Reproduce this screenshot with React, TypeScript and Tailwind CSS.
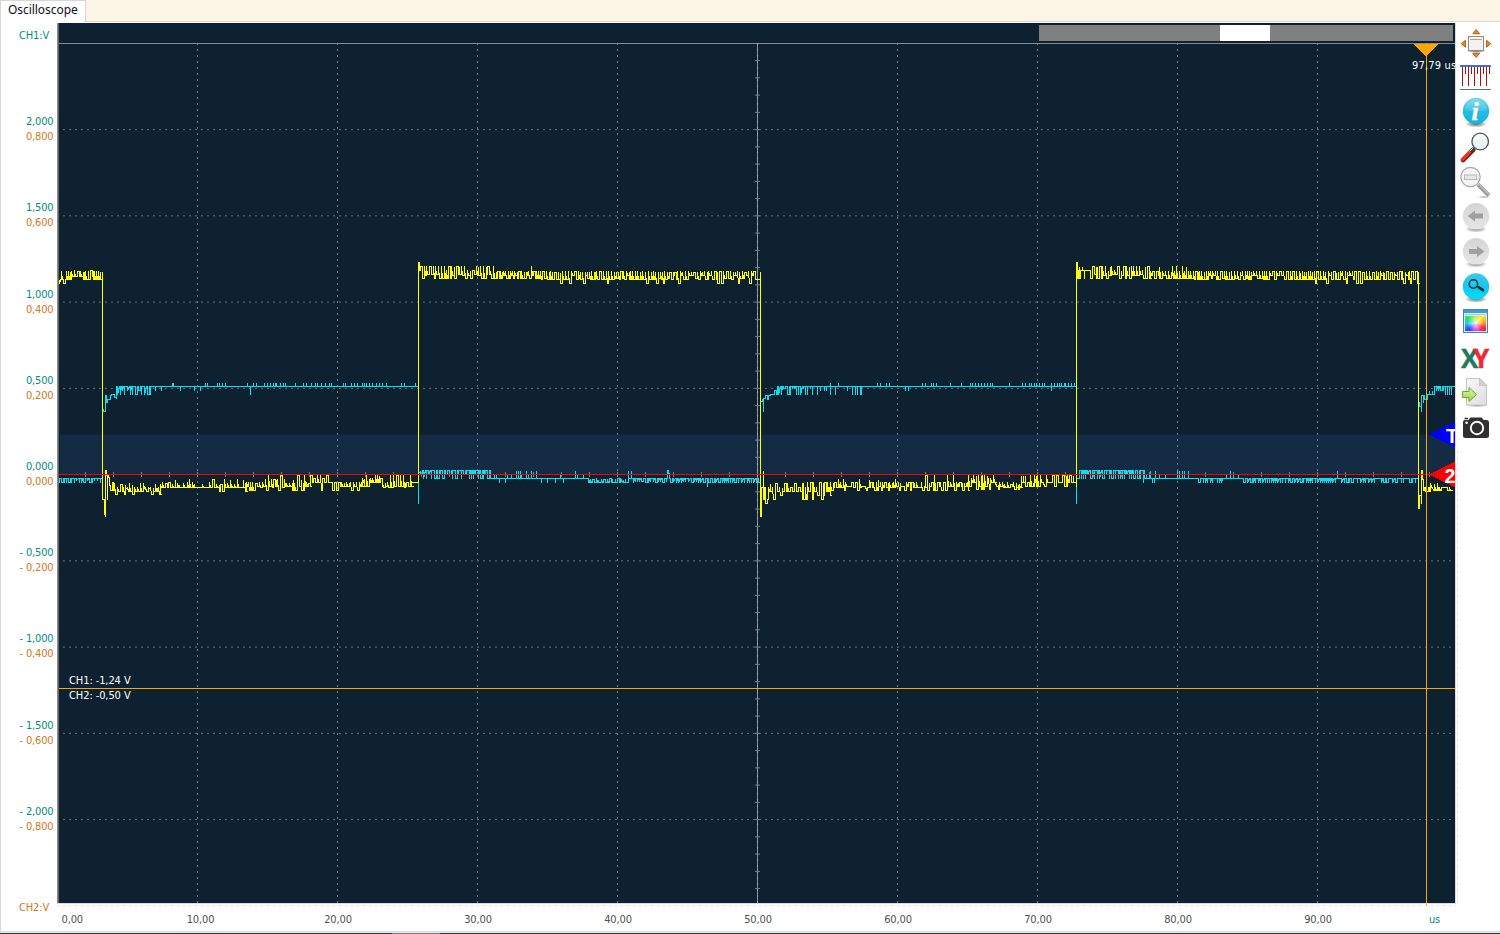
import type { ReactNode } from "react";

const YELLOW = "#ffff00";
const CYAN = "#0adff0";

/* ---------- waveform helpers ---------- */

/** x, y, and whether the segment leading here is slanted. */
type Pt = [number, number, boolean?];

function rng(seed: number) {
  let s = seed;
  return () => {
    s = (s + 0x6d2b79f5) | 0;
    let t = Math.imul(s ^ (s >>> 15), 1 | s);
    t = (t + Math.imul(t ^ (t >>> 7), 61 | t)) ^ t;
    return ((t ^ (t >>> 14)) >>> 0) / 4294967296;
  };
}

/** Full swings off a base level: narrow spikes, short plateaus and slanted returns. */
function pulses(x0: number, x1: number, base: number, levels: number[], seed: number): Pt[] {
  const r = rng(seed);
  const out: Pt[] = [];
  let x = x0;
  while (x < x1) {
    const level = levels[Math.floor(r() * levels.length)];
    out.push([x, base], [x, level]);
    const k = r();
    if (k < 0.4 && x + 2 < x1) {
      x += k < 0.28 ? 1 : 2;
      out.push([x, base, true]);
      x += 1;
    } else if (k < 0.62 && x + 2 < x1) {
      x += 2;
      out.push([x, level], [x, base]);
      x += r() < 0.6 ? 1 : 2;
    } else {
      out.push([x, base]);
      x += r() < 0.55 ? 2 : 3;
    }
  }
  return out;
}

/** Dense swings between an upper and a lower group of levels. */
function noise(x0: number, x1: number, highs: number[], lows: number[], seed: number): Pt[] {
  const r = rng(seed);
  const out: Pt[] = [];
  const pick = (a: number[]) => a[Math.floor(r() * a.length)];
  let x = x0;
  while (x < x1) {
    const hi = pick(highs);
    const lo = pick(lows);
    out.push([x, hi]);
    const k = r();
    if (k < 0.55) {
      x += 1;
      out.push([x, lo, true]);
    } else if (k < 0.75) {
      x += 2;
      out.push([x, hi], [x, lo]);
    } else {
      out.push([x, lo]);
    }
    x += r() < 0.4 ? 1 : 2;
    out.push([x, lo, r() < 0.5]);
  }
  return out;
}

/** Flat line with one pixel wide spikes. */
function spikes(x0: number, x1: number, base: number, at: Pt[]): Pt[] {
  const out: Pt[] = [[x0, base]];
  at.forEach(([x, y]) => out.push([x, y], [x, base]));
  out.push([x1, base]);
  return out;
}

const ups = (origin: number, level: number, xs: number[]): Pt[] =>
  xs.map((x) => [Math.floor(origin + x / 3), level]);

const merge = (...lists: Pt[][]): Pt[] => lists.flat().sort((a, b) => a[0] - b[0]);

function toPath(pts: Pt[]) {
  let d = `M${pts[0][0] + 0.5} ${pts[0][1] + 0.5}`;
  for (let i = 1; i < pts.length; i++) {
    const [x, y, slanted] = pts[i];
    d += slanted ? `L${x + 0.5} ${y + 0.5}` : `H${x + 0.5}V${y + 0.5}`;
  }
  return d;
}

/* Channel 1 */
const ch1: Pt[] = [
  ...pulses(59, 71, 279, [271, 271, 283], 3),
  ...noise(71, 94, [271, 270, 271], [279, 279, 276], 5),
  ...pulses(94, 102, 279, [271, 271, 283], 6),
  [102, 271], [102, 499], [104, 499], [104, 514], [105, 516], [105, 470], [106, 475], [107, 499], [107, 475],
  [108, 477], [109, 485], [110, 490], [112, 482], [113, 490],
  ...noise(114, 160, [483, 487, 484, 487], [491, 491, 488, 494, 491], 8),
  ...noise(160, 246, [483, 487, 484, 479, 482], [487, 487, 491, 487], 21),
  ...noise(246, 310, [482, 475, 483, 482, 479], [486, 490, 486, 487], 17),
  ...noise(310, 330, [475, 475, 478], [482, 490, 482], 33),
  ...noise(330, 362, [482, 482, 482, 475], [486, 490, 486], 35),
  ...noise(362, 382, [475, 475, 478], [482, 486, 482], 36),
  ...noise(382, 411, [475, 482, 482, 475], [486, 486, 483, 487], 37),
  [411, 482], [418, 482], [418, 262], [419, 270],
  ...noise(420, 490, [266, 266, 270, 266], [278, 274, 278, 275], 41),
  ...noise(490, 540, [271, 271, 266, 271], [278, 278, 275], 52),
  ...noise(540, 757, [271, 271, 271, 272, 271], [279, 278, 279, 279, 279, 275, 283], 63),
  [758, 279], [760, 279], [760, 271], [760, 516], [761, 487], [763, 470], [763, 499], [764, 487], [765, 503], [767, 499],
  ...noise(768, 830, [487, 483, 487, 482], [491, 499, 491, 495, 491], 72),
  ...noise(830, 925, [482, 482, 486, 479, 482], [487, 490, 486, 487], 81),
  ...noise(925, 968, [482, 475, 482, 482], [486, 490, 486], 93),
  ...noise(968, 995, [475, 475, 475, 478], [482, 489, 482, 486], 99),
  ...noise(995, 1021, [482, 482, 484], [487, 489, 486], 101),
  ...noise(1021, 1075, [475, 475, 475, 482], [482, 486, 482, 486], 102),
  [1076, 486], [1076, 262], [1077, 278],
  [1078, 270], [1079, 266], [1079, 278], [1080, 270], [1082, 266], [1082, 270], [1084, 278], [1084, 270],
  [1090, 270], [1090, 278],
  ...noise(1092, 1150, [266, 266, 270, 266], [278, 274, 278, 275], 107),
  ...noise(1150, 1190, [271, 266, 271, 271], [278, 278, 275, 278], 113),
  ...noise(1190, 1300, [271, 271, 271, 271], [279, 278, 279, 275], 118),
  ...noise(1300, 1417, [271, 271, 272, 271], [279, 279, 279, 279, 275, 279, 283], 122),
  [1418, 271], [1418, 508], [1419, 495], [1421, 503], [1421, 470], [1422, 479], [1423, 490], [1424, 487],
  [1425, 491], [1428, 487], [1429, 491],
  ...noise(1430, 1452, [483, 483, 487], [490, 490, 487], 131),
];

/* Channel 2 */
const ch2: Pt[] = [
  ...pulses(59, 102, 478, [482, 482, 482, 480], 205),
  [102, 478], [102, 409], [103, 411], [105, 411], [105, 395], [106, 402], [107, 399], [110, 395], [111, 394],
  [114, 397], [116, 398], [116, 386],
  ...pulses(117, 152, 386, [394, 394, 390, 394], 211),
  ...spikes(152, 418, 386, merge(
    ups(58, 382, [343, 347, 443, 447, 478, 484, 493, 502, 568, 586, 595, 619, 628, 637, 646, 651, 655, 667, 676, 683, 712,
      736, 745, 760, 772, 778, 790, 802, 814, 820, 856, 862, 880, 889, 898, 913, 919, 925, 934, 943, 955, 964, 973, 985,
      1030, 1039, 1072]),
    ups(58, 390, [292, 310, 367, 409, 427]),
    ups(58, 394, [577]),
  )),
  [418, 386], [418, 503], [418, 472],
  ...pulses(420, 490, 470, [478, 478, 474, 478], 221),
  ...spikes(490, 588, 478, merge(
    ups(400, 470, [348, 356, 361, 378, 393, 408, 526]),
    ups(400, 474, [282, 290, 322, 335, 365, 385, 480, 533, 550]),
    ups(400, 482, [298, 316, 424, 442, 466, 490]),
  )),
  ...pulses(588, 628, 482, [478, 478, 479], 230),
  [628, 470], [628, 478], [631, 470], [631, 478],
  ...pulses(633, 667, 478, [482, 482, 481], 233),
  [667, 470], [668, 473], [669, 478],
  ...pulses(670, 707, 478, [482, 482, 481], 234),
  [707, 486], [707, 478],
  ...pulses(708, 757, 478, [482, 482, 482], 235),
  [758, 482], [760, 482], [760, 401], [762, 399], [763, 411], [763, 398], [765, 395], [767, 399], [768, 395],
  [770, 394], [774, 390], [776, 394], [777, 386],
  ...pulses(778, 814, 386, [394, 394, 388, 394], 241),
  ...spikes(814, 1076, 386, merge(
    ups(750, 394, [202, 240, 256, 307, 315, 321, 331, 334]),
    ups(750, 390, [212, 222, 230, 292, 466, 475]),
    ups(750, 382, [240, 265, 382, 390, 409, 418, 517, 525, 544, 550, 559, 601, 634, 661, 667, 676, 685, 694, 703, 712,
      720, 727, 778, 818, 826, 838, 845, 852, 860, 868, 876, 884, 904, 913, 922, 935, 944]),
    ups(1020, 390, [94]),
    ups(1020, 382, [118, 124, 136, 145, 154, 163]),
  )),
  [1076, 386], [1076, 503], [1076, 478],
  ...pulses(1079, 1144, 470, [478, 478, 474, 478], 251),
  ...spikes(1144, 1198, 478, merge(
    ups(1020, 482, [370, 397, 404]),
    ups(1020, 474, [380, 388, 418, 435]),
    ups(1020, 470, [390, 406, 472, 478, 486, 493, 505]),
  )),
  ...pulses(1198, 1224, 478, [482, 478, 482], 261),
  ...spikes(1224, 1243, 478, merge(ups(1020, 474, [618, 640, 655]), ups(1020, 470, [631]))),
  ...pulses(1243, 1336, 478, [482, 482, 482], 262),
  [1337, 470], [1337, 478],
  ...pulses(1338, 1417, 478, [482, 482, 478, 482], 263),
  [1418, 478], [1418, 402], [1419, 406], [1421, 411], [1421, 395], [1423, 402], [1423, 395], [1424, 399],
  [1427, 399], [1427, 394],
  ...spikes(1428, 1434, 394, [[1429, 390], [1432, 390]]),
  ...pulses(1434, 1446, 386, [394, 390, 394], 271),
  [1447, 394], [1447, 386], [1449, 394], [1449, 386], [1451, 394], [1451, 386], [1455, 386],
];

const gridX = [197, 337, 477, 617, 897, 1037, 1177, 1317];
const gridY = [-4, -3, -2, -1, 1, 2, 3, 4].map((k) => 474.6 + k * 86.25);
const ticksY = Array.from({ length: 49 }, (_, i) => 60.6 + i * 17.25);
const ticksX = Array.from({ length: 49 }, (_, i) => 85 + i * 28).filter((x) => x !== 757);

function Plot() {
  return (
    <svg className="block h-[883px] w-[1402px]" viewBox="57 23 1402 883">
      <rect x="57" y="23" width="1398" height="880" fill="#0e2131" />
      <rect x="57" y="23" width="1" height="880" fill="#8b8b8b" />
      <rect x="58" y="23" width="1" height="880" fill="#626262" />
      <rect x="60" y="434.5" width="1395" height="39.5" fill="#132b43" />

      <g stroke="#6f7d88" strokeDasharray="2 4">
        {gridX.map((x) => (
          <path key={x} d={`M${x + 0.5} 43V903`} />
        ))}
      </g>
      <g stroke="#65727d" strokeDasharray="2 4">
        {gridY.map((y) => (
          <path key={y} d={`M63 ${y}H1452`} />
        ))}
      </g>
      <path d="M59 43.5H1455" stroke="#858c93" />
      <path d="M757.5 43V903" stroke="#8b9299" />
      <path d="M757.5 43V903" stroke="#a3a9ae" strokeDasharray="2 4" />
      <g stroke="#78828b">
        {ticksY.map((y) => (
          <path key={y} d={`M755 ${y}H760`} />
        ))}
        {ticksX.map((x) => (
          <path key={x} d={`M${x + 0.5} 472V477`} />
        ))}
      </g>

      <g shapeRendering="crispEdges" fill="none">
        <path d={toPath(ch2)} stroke={CYAN} />
        <path d={toPath(ch1)} stroke={YELLOW} />
        <path d="M59 474.5H1455" stroke="#ff0000" />
        <path d="M59 688.5H1455M1426.5 43V903" stroke="#ffa500" />
        <path d="M1413 44H1439L1426 56.5Z" fill="#ffa500" />
        <path d="M1429 434.5L1455 421.5V447.5Z" fill="#0000ff" />
        <path d="M1429 474.5L1455 461.5V487.5Z" fill="#ff0000" />
      </g>

      <rect x="1039" y="25" width="414" height="16" fill="#808080" />
      <rect x="1220" y="25" width="50" height="16" fill="#ffffff" />

      <svg x="57" y="23" width="1398" height="880" viewBox="57 23 1398 880">
        <g fill="#ffffff" fontFamily="'DejaVu Sans Condensed','DejaVu Sans',sans-serif" fontSize="11">
          <text x="1412" y="69" textLength="44">97,79 us</text>
          <text x="69" y="684" textLength="61.5">CH1: -1,24 V</text>
          <text x="69" y="699" textLength="61.5">CH2: -0,50 V</text>
        </g>
        <g fill="#ffffff" fontFamily="'Liberation Sans',sans-serif" fontWeight="700" fontSize="19.5">
          <text x="1446" y="443">T</text>
          <text x="1444.5" y="483">2</text>
        </g>
      </svg>

      <path d="M57 903.5H1456M1455.5 23V904" stroke="#dcdce2" />
      <path d="M57 905.5H1456" stroke="#dcd8de" strokeDasharray="2 4" />
      <path d="M1457.5 451V903" stroke="#dcd8de" strokeDasharray="2 4" />
      <rect x="1426" y="904" width="1" height="2" fill="#ffa500" />
    </svg>
  );
}

const voltRows = [
  ["2,000", "0,800"],
  ["1,500", "0,600"],
  ["1,000", "0,400"],
  ["0,500", "0,200"],
  ["0,000", "0,000"],
  ["- 0,500", "- 0,200"],
  ["- 1,000", "- 0,400"],
  ["- 1,500", "- 0,600"],
  ["- 2,000", "- 0,800"],
];

function VoltAxis() {
  return (
    <div className="flex w-[56px] shrink-0 flex-col leading-[15px]">
      <div className="mt-[6px] h-[86.2px] shrink-0 pl-[18px] text-[#008c82]">CH1:V</div>
      {voltRows.map(([a, b]) => (
        <div key={a} className="h-[86.2px] shrink-0 pr-[3.5px] text-right">
          <div className="text-[#008c82]">{a}</div>
          <div className="text-[#cc7a1e]">{b}</div>
        </div>
      ))}
      <div className="mt-[10px] pl-[18px] text-[#cc7a1e]">CH2:V</div>
    </div>
  );
}

function TimeAxis() {
  return (
    <div className="flex h-[25px] pt-[6px] leading-[15px] text-[#505050]">
      <div className="w-[73px] shrink-0 pl-[4.5px]">0,00</div>
      <div className="w-[138px] shrink-0 pl-[3px] text-center">10,00</div>
      {["20,00", "30,00", "40,00", "50,00", "60,00", "70,00", "80,00", "90,00"].map((t) => (
        <div key={t} className="w-[140px] shrink-0 text-center">{t}</div>
      ))}
      <div className="ml-[41px] shrink-0 text-[#008c82]">us</div>
    </div>
  );
}

/* ---------- toolbar ---------- */

function Icon({ h, children }: { h: number; children: ReactNode }) {
  return (
    <svg width="32" height={h} viewBox={`0 0 32 ${h}`} className="block shrink-0" fill="none">
      {children}
    </svg>
  );
}

function Toolbar() {
  return (
    <div className="flex w-8 shrink-0 flex-col pt-[6px]">
      <svg width="0" height="0" className="absolute">
        <defs>
          <linearGradient id="aqua" x1="0" y1="0" x2="0" y2="1">
            <stop offset="0" stopColor="#72d9ef" />
            <stop offset=".5" stopColor="#27bce0" />
            <stop offset="1" stopColor="#14b4dc" />
          </linearGradient>
          <linearGradient id="cyanBall" x1="0" y1="0" x2="0" y2="1">
            <stop offset="0" stopColor="#3fc8e8" />
            <stop offset=".5" stopColor="#14c8ee" />
            <stop offset="1" stopColor="#00dcff" />
          </linearGradient>
          <linearGradient id="silver" x1="0" y1="0" x2="0" y2="1">
            <stop offset="0" stopColor="#d4d4d4" />
            <stop offset="1" stopColor="#e6e6e6" />
          </linearGradient>
          <radialGradient id="shade">
            <stop offset="0" stopColor="#444" stopOpacity=".85" />
            <stop offset=".6" stopColor="#666" stopOpacity=".45" />
            <stop offset="1" stopColor="#888" stopOpacity="0" />
          </radialGradient>
          <linearGradient id="page" x1="0" y1="0" x2="1" y2="1">
            <stop offset="0" stopColor="#f8f8f8" />
            <stop offset="1" stopColor="#dedede" />
          </linearGradient>
          <linearGradient id="leaf" x1="0" y1="0" x2="0" y2="1">
            <stop offset="0" stopColor="#e3f8b0" />
            <stop offset="1" stopColor="#94d53c" />
          </linearGradient>
        </defs>
      </svg>

      <Icon h={32}>
        <ellipse cx="16" cy="23" rx="10" ry="2" fill="url(#shade)" />
        <rect x="8.5" y="8.5" width="15" height="14" fill="#f3f3f3" stroke="#8c8c8c" />
        <path d="M10 11.5H22" stroke="#e59a4b" />
        <g fill="#ee8722" stroke="#b05a14" strokeWidth=".9">
          <path d="M16.2 1.5L19.7 5.8H12.8Z" />
          <path d="M16.2 29.5L19.7 25.3H12.8Z" />
          <path d="M1.2 15.8L5.5 12.3V19.2Z" />
          <path d="M30.8 15.8L26.5 12.3V19.2Z" />
        </g>
      </Icon>

      <Icon h={34}>
        <g shapeRendering="crispEdges">
          <path d="M0 6H31" stroke="#3a74d0" strokeWidth="2" />
          <path d="M2.5 7V26M8.5 7V26M14.5 7V26M20.5 7V26M26.5 7V26" stroke="#a80f0f" />
          <path d="M5.5 7V14M11.5 7V14M17.5 7V14M23.5 7V14M29.5 7V14" stroke="#8f1212" />
          <path d="M0 29.5H31" stroke="#3a74d0" />
        </g>
      </Icon>

      <Icon h={35}>
        <ellipse cx="16" cy="30" rx="11" ry="3.6" fill="url(#shade)" />
        <circle cx="16" cy="17" r="13.2" fill="url(#aqua)" />
        <path d="M4.5 15a11.6 11.6 0 0 1 23 0q-11 5 -23 0Z" fill="#fff" opacity=".14" />
        <text x="11.6" y="25.5" fill="#fff" stroke="#fff" strokeWidth=".5" fontFamily="'Liberation Serif',serif" fontStyle="italic" fontWeight="700" fontSize="26">i</text>
      </Icon>

      <Icon h={35}>
        <path d="M13 21L3 31" stroke="#8d1710" strokeWidth="4.6" strokeLinecap="round" />
        <path d="M12 20.6L2.5 30.4" stroke="#e53b25" strokeWidth="3" strokeLinecap="round" />
        <path d="M14.5 19L10.5 23" stroke="#3c3c3c" strokeWidth="3.6" />
        <path d="M13.5 18.5L9.5 22.5" stroke="#d9d9d9" strokeWidth="1" />
        <circle cx="20.2" cy="12.5" r="8.3" fill="#f0f3f3" stroke="#4c5557" strokeWidth="1.3" />
        <path d="M14.5 12a6 6 0 0 1 11 -2" stroke="#fff" strokeWidth="2.5" />
      </Icon>

      <Icon h={35}>
        <ellipse cx="24" cy="33" rx="7" ry="1.2" fill="url(#shade)" opacity=".6" />
        <path d="M18 20.5L29 31.5" stroke="#9b9b9b" strokeWidth="4" />
        <path d="M18.5 20L29.5 31" stroke="#bebebe" strokeWidth="1.6" />
        <circle cx="10.5" cy="13" r="9.7" fill="#f4f4f4" stroke="#a9a9a9" strokeWidth="1.2" />
        <rect x="4.5" y="11" width="12" height="4.5" fill="#e6e6e6" stroke="#b9b9b9" />
      </Icon>

      {[false, true].map((right) => (
        <Icon key={String(right)} h={35}>
          <ellipse cx="16" cy="30" rx="11" ry="3.6" fill="url(#shade)" opacity=".8" />
          <circle cx="16" cy="17.3" r="13.2" fill="url(#silver)" />
          <path
            d={right ? "M9 15H17V12L24.5 17.4L17 23V20H9Z" : "M23 14.5H15V11.5L7.8 17L15 22.5V19.5H23Z"}
            fill="#a0a0a0"
          />
        </Icon>
      ))}

      <Icon h={35}>
        <ellipse cx="16" cy="30" rx="11.5" ry="3.8" fill="url(#shade)" />
        <circle cx="16" cy="17.5" r="13.2" fill="url(#cyanBall)" />
        <circle cx="13.4" cy="15" r="4.2" stroke="#17333d" strokeWidth="1.5" />
        <path d="M17 17.2L18.5 18.2" stroke="#17333d" strokeWidth="1.5" />
        <path d="M19 18.5L23 21.2" stroke="#17333d" strokeWidth="2.8" strokeLinecap="round" />
      </Icon>

      <div className="flex h-[35px] shrink-0 flex-col pt-[5px] pl-[3px]">
        <div className="flex h-[24px] w-[25px] flex-col border border-[#3d89ba] bg-[#dbeefa] px-px pb-px">
          <div className="-mx-px h-[3px] bg-[#4798cb]" />
          <div className="mt-px mb-px h-px bg-[#9dccea]" />
          <div className="flex-1 bg-[radial-gradient(circle,#ffffffd9_0%,#ffffff00_65%),conic-gradient(#b8f02c,#ffee30_45deg,#ff9a28_85deg,#ff2030_120deg,#ff20c0_160deg,#a030ff_195deg,#3040ff_230deg,#20c8ff_270deg,#20e860_305deg,#b8f02c)]" />
        </div>
      </div>

      <Icon h={35}>
        <text y="28.5" fontFamily="'Open Sans','Liberation Sans',sans-serif" fontWeight="700" fontSize="26" stroke="#217a5d" strokeWidth=".4">
          <tspan x="1" fill="#217a5d">X</tspan>
          <tspan x="13" fill="#f32735" stroke="#f32735">Y</tspan>
        </text>
      </Icon>

      <Icon h={35}>
        <ellipse cx="17" cy="31.5" rx="12" ry="1.8" fill="url(#shade)" opacity=".6" />
        <path d="M6.5 4.5H20L26.5 11V31H6.5Z" fill="url(#page)" stroke="#c4c4c4" />
        <path d="M19.5 4.5V11.5H26.5Z" fill="#d0d0d0" stroke="#bcbcbc" strokeWidth=".7" />
        <path d="M2.5 17.5H9V13.5L16.5 20.5L9 27.5V23.5H2.5Z" fill="url(#leaf)" stroke="#6aa82c" />
      </Icon>

      <Icon h={35}>
        <path
          d="M5 11H8.5L10.5 8.5H21.5L23.8 11H26.5Q29 11 29 13.5V26.5Q29 29 26.5 29H5.5Q3 29 3 26.5V13Q3 11 5 11Z"
          fill="#303030"
        />
        <path d="M4.5 9.5H8" stroke="#303030" strokeWidth="1.5" />
        <circle cx="17" cy="19" r="6.2" stroke="#fff" strokeWidth="1.9" />
        <circle cx="6.6" cy="13.7" r="1.3" fill="#fff" />
      </Icon>
    </div>
  );
}

export default function App() {
  return (
    <div className="flex h-[934px] w-[1500px] flex-col overflow-hidden bg-white font-['DejaVu_Sans_Condensed','DejaVu_Sans',sans-serif] text-[11px] tracking-[-0.15px]">
      <div className="flex h-[22px] shrink-0">
        <div className="w-[86px] border-t border-r border-l border-[#d6d6d6] bg-white pl-[7px] font-['Noto_Sans','Open_Sans',sans-serif] text-[12px] leading-[18px] tracking-[-0.05px] text-[#101018]">
          Oscilloscope
        </div>
        <div className="flex-1 border-b border-[#d9d6cf] bg-[#fdf5e6]" />
      </div>
      <div className="flex h-[910px] shrink-0 border-b border-l border-[#d6d6dc]">
        <VoltAxis />
        <div className="flex w-[1403px] shrink-0 flex-col pt-px">
          <Plot />
          <TimeAxis />
        </div>
        <Toolbar />
      </div>
      <div className="h-px shrink-0 bg-[#eeeef0]" />
      <div className="flex h-px shrink-0 bg-[#25323a]">
        <div className="ml-[392px] w-[48px] bg-[#70757a]" />
      </div>
    </div>
  );
}
